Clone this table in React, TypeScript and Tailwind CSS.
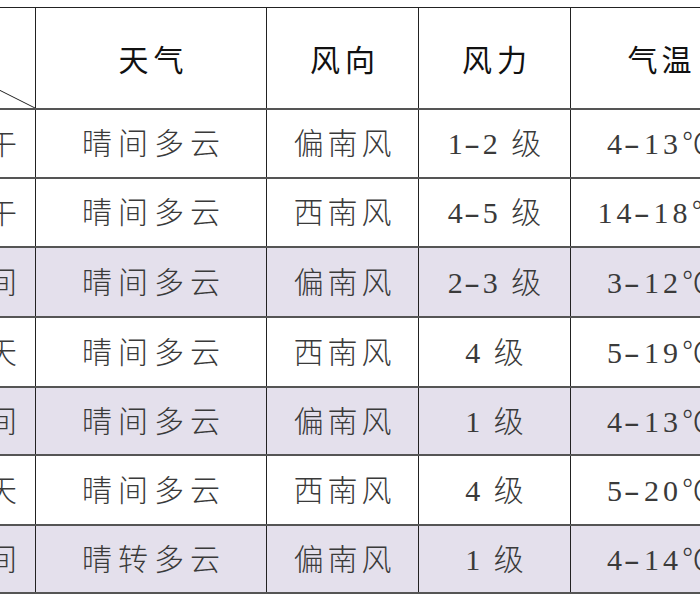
import React from "react";

const FONT = "font-['Liberation_Serif','Noto_Sans_CJK_SC',serif]";

type Row = { label: string; weather: string; dir: string; force: string; temp: string; shade: boolean; h: string };

const rows: Row[] = [
  { label: "上午", weather: "晴间多云", dir: "偏南风", force: "1-2 级", temp: "4-13℃", shade: false, h: "h-[69px]" },
  { label: "下午", weather: "晴间多云", dir: "西南风", force: "4-5 级", temp: "14-18℃", shade: false, h: "h-[69px]" },
  { label: "夜间", weather: "晴间多云", dir: "偏南风", force: "2-3 级", temp: "3-12℃", shade: true, h: "h-[70px]" },
  { label: "明天", weather: "晴间多云", dir: "西南风", force: "4 级", temp: "5-19℃", shade: false, h: "h-[70px]" },
  { label: "夜间", weather: "晴间多云", dir: "偏南风", force: "1 级", temp: "4-13℃", shade: true, h: "h-[68px]" },
  { label: "后天", weather: "晴间多云", dir: "西南风", force: "4 级", temp: "5-20℃", shade: false, h: "h-[70px]" },
  { label: "夜间", weather: "晴转多云", dir: "偏南风", force: "1 级", temp: "4-14℃", shade: true, h: "h-[68px]" },
];

function Num({ text }: { text: string }) {
  const parts = text.split("-");
  return (
    <span className="whitespace-pre">
      {parts.map((p, i) => (
        <React.Fragment key={i}>
          {i > 0 && <span className="inline-block scale-x-[1.6] px-[2px]">-</span>}
          {p}
        </React.Fragment>
      ))}
    </span>
  );
}

const cellBase = "flex items-center shrink-0 border-r border-[#222]";

export default function App() {
  return (
    <div className={`w-[700px] h-[600px] overflow-hidden bg-white relative ${FONT}`}>
      <div className="mt-[7px] ml-[-164px] w-max border-t border-[#222]">
        <div className="flex h-[102px] border-b-2 border-[#555]">
          <div className={`${cellBase} w-[200px] relative`}>
            <svg className="absolute inset-0 w-full h-full" viewBox="0 0 100 100" preserveAspectRatio="none">
              <line x1="0" y1="0" x2="100" y2="100" stroke="#222" strokeWidth="1" vectorEffect="non-scaling-stroke" />
            </svg>
          </div>
          <div className={`${cellBase} w-[231px] justify-center`}>
            <span className="text-[30px] text-[#111] tracking-[5px] pl-[5px] mt-[4px]">天气</span>
          </div>
          <div className={`${cellBase} w-[152px] justify-center`}>
            <span className="text-[30px] text-[#111] tracking-[5px] pl-[5px] mt-[4px]">风向</span>
          </div>
          <div className={`${cellBase} w-[152px] justify-center`}>
            <span className="text-[30px] text-[#111] tracking-[5px] pl-[5px] mt-[4px]">风力</span>
          </div>
          <div className={`${cellBase} w-[178px] justify-center`}>
            <span className="text-[30px] text-[#111] tracking-[4px] pl-[4px] mt-[4px]">气温</span>
          </div>
        </div>
        {rows.map((r, i) => (
          <div key={i} className={`flex ${r.h} border-b-2 border-[#555] ${r.shade ? "bg-[#e4e0ec]" : "bg-white"}`}>
            <div className={`${cellBase} w-[200px] justify-end pr-[12px]`}>
              <span className="text-[30px] font-light text-[#3a3a3a] tracking-[6px]">{r.label}</span>
            </div>
            <div className={`${cellBase} w-[231px] justify-center`}>
              <span className="text-[30px] font-light text-[#3a3a3a] tracking-[6px] pl-[6px]">{r.weather}</span>
            </div>
            <div className={`${cellBase} w-[152px] justify-center`}>
              <span className="text-[30px] font-light text-[#3a3a3a] tracking-[4px] pl-[4px]">{r.dir}</span>
            </div>
            <div className={`${cellBase} w-[152px] justify-center`}>
              <span className="text-[30px] font-light text-[#3a3a3a] tracking-[3px] pl-[3px]">
                <Num text={r.force} />
              </span>
            </div>
            <div className={`${cellBase} w-[178px] justify-center`}>
              <span className="text-[30px] font-light text-[#3a3a3a] tracking-[4px] pl-[4px]">
                <Num text={r.temp} />
              </span>
            </div>
          </div>
        ))}
      </div>
    </div>
  );
}
